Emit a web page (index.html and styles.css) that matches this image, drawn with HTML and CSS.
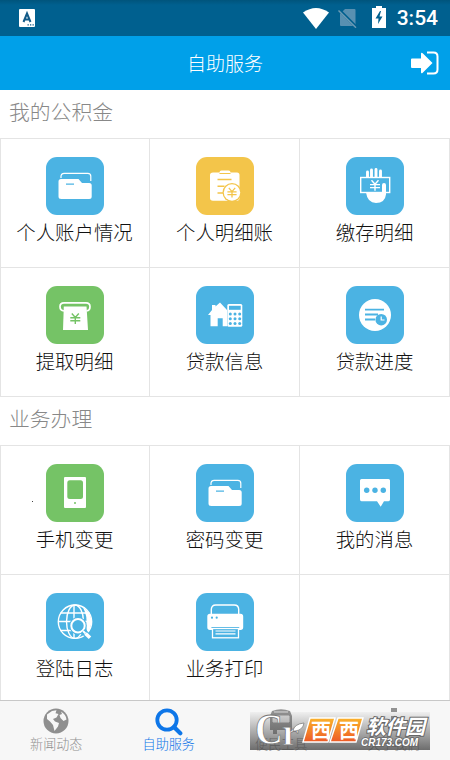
FILE: index.html
```html
<!DOCTYPE html>
<html lang="zh-CN">
<head>
<meta charset="utf-8">
<title>自助服务</title>
<link rel="stylesheet" href="styles.css">
</head>
<body>
<svg class="defs" width="0" height="0" aria-hidden="true">
  <defs>
    <symbol id="folder" viewBox="0 0 58 58">
      <path d="M15 21v-1.500q0-3.200 3.200-3.200h23.600q3 0 3 3V24" fill="none" stroke="#fff" stroke-width="1.200"/>
      <path d="M15 22h17.500l3.500 4h7.200q2.500 0 2.500 2.500v11q0 2.500-2.500 2.500H15.200q-2.700 0-2.700-2.500V24.500Q12.500 22 15 22z" fill="#fff"/>
      <path d="M20 27.200h8" stroke="#4bb3e3" stroke-width="1.300"/>
    </symbol>
    <symbol id="yen" viewBox="0 0 12 12">
      <path d="M2.500 1 6 5l3.500-4M1 5.300h10M1 8.300h10M6 5v6.500" fill="none" stroke="currentColor" stroke-width="1.400"/>
    </symbol>
  </defs>
</svg>

<header class="status">
  <svg class="status-app" viewBox="0 0 16 18"><rect width="16" height="18" rx="1" fill="#fff"/><path d="M4.500 13 8 4.500 11.500 13M5.800 10.500h4.500" fill="none" stroke="#125a87" stroke-width="2"/><path d="M8.500 15.800h6.500" stroke="#125a87" stroke-width="1.200" stroke-dasharray="1.300 1.200"/></svg>
  <div class="status-right">
    <svg width="26" height="21" viewBox="0 0 26 21"><path d="M0 4.500Q13-4.500 26 4.500L13 21z" fill="#fff"/></svg>
    <svg class="sim" width="20" height="20" viewBox="0 0 20 20"><path d="M7 1h9.500q1 0 1 1v16H3q-1 0-1-1V6z" fill="#5890b1"/><path d="m.8 1.500 17.500 17.500" stroke="#00608f" stroke-width="3"/><path d="m.5 2.500 17.500 17.200" stroke="#6c9bb5" stroke-width="1.500"/></svg>
    <svg class="battery" width="14" height="22" viewBox="0 0 14 22"><path d="M4 0h6v2h4v20H0V2h4z" fill="#fff"/><path d="M8 5 3.500 12.500h3L6 18l4.500-7.500h-3L9 5z" fill="#00608f"/></svg>
    <span class="clock">3:54</span>
  </div>
</header>

<div class="navbar">
  <h1>自助服务</h1>
  <svg class="exit" width="28" height="24" viewBox="0 0 28 24"><path d="M1 7.500h9V3q0-2 1.700-.7L21.500 12l-9.800 9.700Q10 23 10 21v-4H1q-1 0-1-1V8.500q0-1 1-1z" fill="#fff"/><path d="M16 1.500h6.500q4 0 4 4v13q0 4-4 4H16" fill="none" stroke="#fff" stroke-width="2"/></svg>
</div>

<main>
  <h2>我的公积金</h2>
  <div class="grid">
    <a class="cell"><svg class="icon blue"><use href="#folder"/></svg><span>个人账户情况</span></a>
    <a class="cell"><svg class="icon yellow" viewBox="0 0 58 58"><path d="M17 15.500h6.500q0-2 2-2h7q2 0 2 2H41q2.500 0 2.500 2.500v23q0 2.700-2.500 2.700H17q-3 0-3-2.700V18q0-2.500 3-2.500z" fill="#fff"/><path d="M23.500 16.500h11" stroke="#f3c54a"/><path d="M21.500 22.500h14M21.500 29.200h7M21.500 36h6" stroke="#f3c54a" stroke-width="1.500"/><circle cx="36" cy="35.500" r="9.500" fill="#f3c54a"/><circle cx="36" cy="35.500" r="8.200" fill="#fff"/><use href="#yen" x="30.500" y="30" width="11" height="11" color="#f3c54a"/></svg><span>个人明细账</span></a>
    <a class="cell"><svg class="icon blue" viewBox="0 0 58 58"><path d="M21.500 15v6M25.500 13v8M30 12.500V21M34.500 14v7" stroke="#fff" stroke-width="2.900" stroke-linecap="round"/><rect x="14.700" y="20.500" width="29" height="15" fill="#4bb3e3" stroke="#fff" stroke-width="1.400"/><path d="M20 35.500h16V28q0-2 2-2t2 2v9.500Q39 46 30 46q-8.500 0-10-10.500z" fill="#fff"/><use href="#yen" x="23" y="22.300" width="12" height="12" color="#fff"/></svg><span>缴存明细</span></a>
    <a class="cell"><svg class="icon green" viewBox="0 0 58 58"><path d="M18 25q-4-.5-4-4.300t4-3.800h22q4 0 4 3.800T40.500 25" fill="none" stroke="#fff" stroke-width="1.700"/><path d="M17.800 20.500h22.700L42 44H17z" fill="#fff"/><use href="#yen" x="23.300" y="26.500" width="12" height="12" color="#75c366"/></svg><span>提取明细</span></a>
    <a class="cell"><svg class="icon blue" viewBox="0 0 58 58"><path d="M16 24v-5h3.500v1.500L24 16.500 31 24v16.300h-4.300v-8h-5v8h-7.200V29H12z" fill="#fff"/><rect x="31.300" y="18" width="15" height="22.700" rx="1.500" fill="#fff"/><rect x="33" y="19.800" width="11.700" height="4" fill="#4bb3e3"/><g fill="#4bb3e3"><circle cx="34.300" cy="28" r="1.500"/><circle cx="39" cy="28" r="1.500"/><circle cx="43.700" cy="28" r="1.500"/><circle cx="34.300" cy="32.700" r="1.500"/><circle cx="39" cy="32.700" r="1.500"/><circle cx="43.700" cy="32.700" r="1.500"/><circle cx="34.300" cy="37.400" r="1.500"/><circle cx="39" cy="37.400" r="1.500"/><circle cx="43.700" cy="37.400" r="1.500"/></g></svg><span>贷款信息</span></a>
    <a class="cell"><svg class="icon blue" viewBox="0 0 58 58"><circle cx="29" cy="29" r="16" fill="#fff"/><path d="M19 23.700h19M19 28.500h13M19 33.500h10" stroke="#4bb3e3" stroke-width="1.800"/><circle cx="35.200" cy="33.700" r="5.800" fill="#4bb3e3"/><path d="M35.200 30.500v3.500h3.300" fill="none" stroke="#fff" stroke-width="1.200"/></svg><span>贷款进度</span></a>
  </div>

  <h2>业务办理</h2>
  <div class="grid">
    <a class="cell"><svg class="icon green" viewBox="0 0 58 58"><rect x="18" y="13" width="22" height="31" rx="1" fill="#fff"/><rect x="21.300" y="16.300" width="15.700" height="18.700" rx="2.500" fill="#75c366"/><circle cx="29" cy="39" r="1" fill="#75c366"/></svg><span>手机变更</span><i class="speck"></i></a>
    <a class="cell"><svg class="icon blue"><use href="#folder"/></svg><span>密码变更</span></a>
    <a class="cell"><svg class="icon blue" viewBox="0 0 58 58"><path d="M15.500 15h27q1.500 0 1.500 1.500v19q0 1.800-1.500 1.800H38l-3.300 5.500-3.700-5.500H15.500q-1.500 0-1.500-1.800v-19q0-1.500 1.500-1.500z" fill="#fff"/><g fill="#4bb3e3"><circle cx="20.700" cy="26.300" r="2.700"/><circle cx="29" cy="26.300" r="2.700"/><circle cx="37.300" cy="26.300" r="2.700"/></g></svg><span>我的消息</span></a>
    <a class="cell"><svg class="icon blue" viewBox="0 0 58 58"><g fill="none" stroke="#fff" stroke-width="1.400"><circle cx="29" cy="28.700" r="16.700"/><ellipse cx="29" cy="28.700" rx="8.500" ry="16.700"/><path d="M28 12v33.500M14.500 20h29M12 28.500h33M14.500 37.500h20"/></g><path d="M37 14.500Q51 24 41.500 41L40 33q2-9-3-18.500z" fill="#fff"/><circle cx="32" cy="32.700" r="8.800" fill="#4bb3e3"/><circle cx="32" cy="32.700" r="6.700" fill="#4bb3e3" stroke="#fff" stroke-width="2"/><path d="m37 38 7 7" stroke="#4bb3e3" stroke-width="6"/><path d="m37 38 2.500 2.500" stroke="#fff" stroke-width="1.800"/><path d="m39.500 40.500 4.500 4.300" stroke="#fff" stroke-width="3.600"/></svg><span>登陆日志</span></a>
    <a class="cell"><svg class="icon blue" viewBox="0 0 58 58"><path d="M15.300 21v-4.500q0-4.500 4.500-4.500h18.400q4.500 0 4.500 4.500V21" fill="none" stroke="#fff" stroke-width="1.400"/><path d="M14 20.700h30.500q2.700 0 2.700 2.700v10.900q0 2.700-2.700 2.700H14q-2.700 0-2.700-2.700V23.400q0-2.700 2.700-2.700z" fill="#fff"/><circle cx="16" cy="24.700" r="1.100" fill="#4bb3e3"/><circle cx="20.700" cy="24.700" r="1.100" fill="#4bb3e3"/><path d="M15.500 34.500h27.700" stroke="#4bb3e3" stroke-width="1.200"/><rect x="16.500" y="35.500" width="26" height="9.300" fill="#4bb3e3" stroke="#fff" stroke-width="1.300"/><path d="M19.500 38h20M19.500 40.800h20" stroke="#fff" stroke-width="1.200"/></svg><span>业务打印</span></a>
    <a class="cell"></a>
  </div>
</main>

<nav class="tabs">
  <a class="tab"><svg width="26" height="26" viewBox="0 0 26 26"><circle cx="13" cy="13" r="12.500" fill="#8f8f8f"/><path d="M4 6.500 9 3l4.500-.8-1 3 3 .8-2 3.500-3.500 1.500 2 2.500 4 1.500-1 3.500-3.500 4.500-1.500-6-3-3.500-3-2.500zM18 3.500q5 3 5.500 8l-3 1.500-3-3-1-3 2.500-1z" fill="#f7f7f7"/></svg><span>新闻动态</span></a>
  <a class="tab active"><svg width="28" height="28" viewBox="0 0 28 28"><circle cx="12" cy="12" r="9.700" fill="none" stroke="#0e76e8" stroke-width="3.800"/><path d="m19 19 6.300 6.300" stroke="#0e76e8" stroke-width="4.200" stroke-linecap="round"/></svg><span>自助服务</span></a>
  <a class="tab"><svg width="26" height="27" viewBox="0 0 26 27"><path d="M4 3q9-3.500 18 0l2 5v14H2V8z" fill="#929292"/><path d="M6 4h14M5 8h16v6H5z" fill="#ddd" stroke="#ddd"/><path d="M5 22v4h4v-4M17 22v4h4v-4" fill="#929292"/></svg><span>便民工具</span></a>
  <a class="tab"><svg width="26" height="27" viewBox="0 0 26 27"><path d="M10 0h6v4h-6zM10 8h6v15h-6z" fill="#929292"/></svg><span>关于我们</span></a>
  <div class="watermark">
    <svg width="180" height="38" viewBox="0 0 180 38">
      <defs><linearGradient id="org" x2="0" y2="1"><stop stop-color="#fbb32b"/><stop offset="1" stop-color="#ed5926"/></linearGradient></defs>
      <g class="mark-cr"><text x="5" y="32" textLength="28" lengthAdjust="spacingAndGlyphs" font-size="45">C</text><text x="32" y="33" font-size="38">r</text></g>
      <path d="M43 19q1-7 11-8-1 7-9 8z" fill="#fff" stroke="#777" stroke-width=".7"/>
      <path d="M60 6h25l-7 24H53zM88 6h25l-7 24H80z" fill="url(#org)" stroke="#fff" stroke-width="1.400"/>
      <g class="mark-xi"><text x="61" y="26">西</text><text x="89" y="26">西</text></g>
      <g class="mark-cn"><text x="116" y="22" textLength="59">软件园</text></g>
      <text class="mark-url" x="111" y="34" textLength="57" lengthAdjust="spacingAndGlyphs">CR173.COM</text>
    </svg>
  </div>
</nav>
</body>
</html>
```
FILE: styles.css
```css
* {
  box-sizing: border-box;
}

body {
  display: flex;
  flex-direction: column;
  height: 760px;
  margin: 0;
  overflow: hidden;
  background: #fff;
  color: #111;
  font-family: "Noto Sans CJK SC", sans-serif;
  font-weight: 300;
}

.defs {
  position: absolute;
}

.status {
  display: flex;
  flex: none;
  align-items: center;
  justify-content: space-between;
  height: 36px;
  padding: 0 12px 0 19px;
  background: linear-gradient(#00547c, #00608f 5px);
}

.status-app {
  width: 16px;
  height: 18px;
}

.status-right {
  display: flex;
  align-items: center;
}

.sim {
  margin-left: 9px;
}

.battery {
  margin: 0 11px 3px 14px;
}

.clock {
  color: #fff;
  font: 500 21px/36px Roboto, sans-serif;
}

.navbar {
  display: grid;
  flex: none;
  grid-template-columns: 1fr auto 1fr;
  align-items: center;
  height: 54px;
  padding-right: 11px;
  background: #00a0e9;
}

.navbar h1 {
  grid-column: 2;
  margin: 0 0 0 11px;
  color: #fff;
  font-size: 19px;
  font-weight: 300;
  line-height: 54px;
}

.exit {
  justify-self: end;
}

main {
  flex: none;
  height: 610px;
  overflow: hidden;
}

h2 {
  height: 48px;
  margin: 0;
  padding-left: 9px;
  color: #888;
  font-size: 20.8px;
  font-weight: 300;
  line-height: 43px;
}

.grid {
  display: grid;
  grid-template-columns: 150px 150px 150px;
  grid-auto-rows: 129px;
  border-top: 1px solid #e4e4e4;
  box-shadow: inset 1px 0 #e4e4e4;
}

.cell {
  position: relative;
  display: flex;
  flex-direction: column;
  align-items: center;
  padding-top: 18px;
  border-right: 1px solid #e4e4e4;
  border-bottom: 1px solid #e4e4e4;
  font-size: 19.4px;
  line-height: 28px;
  white-space: nowrap;
}

.cell span {
  margin-top: 3px;
}

.icon {
  width: 58px;
  height: 58px;
  border-radius: 11px;
}

.blue {
  background: #4bb3e3;
}

.yellow {
  background: #f3c54a;
}

.green {
  background: #75c366;
}

.speck {
  position: absolute;
  top: 55px;
  left: 32px;
  width: 1px;
  height: 1px;
  background: #444;
}

.tabs {
  position: relative;
  display: grid;
  flex: none;
  grid-template-columns: repeat(4, 112.5px);
  height: 60px;
  border-top: 1px solid #c8c8c8;
  background: #f7f7f7;
}

.tab {
  display: flex;
  flex-direction: column;
  align-items: center;
  justify-content: space-between;
  padding: 7px 0 6px;
  color: #8f8f8f;
  font-size: 13.1px;
  line-height: 20px;
}

.tab svg {
  flex: none;
}

.tab span {
  margin-top: -4px;
}

.active {
  color: #0e76e8;
}

.watermark {
  position: absolute;
  top: 11px;
  left: 250px;
  width: 180px;
  height: 38px;
  background: linear-gradient(rgba(100, 100, 100, 0.05), rgba(70, 70, 70, 0.78));
}

.watermark svg {
  display: block;
}

.mark-cr {
  fill: #fff;
  stroke: #777;
  stroke-width: 0.8px;
  font-family: "Liberation Serif", serif;
  font-weight: 700;
}

.mark-xi {
  fill: #fff;
  font-size: 20px;
  font-weight: 700;
}

.mark-cn {
  fill: #fff;
  stroke: #666;
  stroke-width: 2px;
  paint-order: stroke;
  font-size: 20px;
  font-style: italic;
  font-weight: 700;
}

.mark-url {
  fill: #fff;
  stroke: #666;
  stroke-width: 1.5px;
  paint-order: stroke;
  font: italic 700 10px "Liberation Sans", sans-serif;
}
```
